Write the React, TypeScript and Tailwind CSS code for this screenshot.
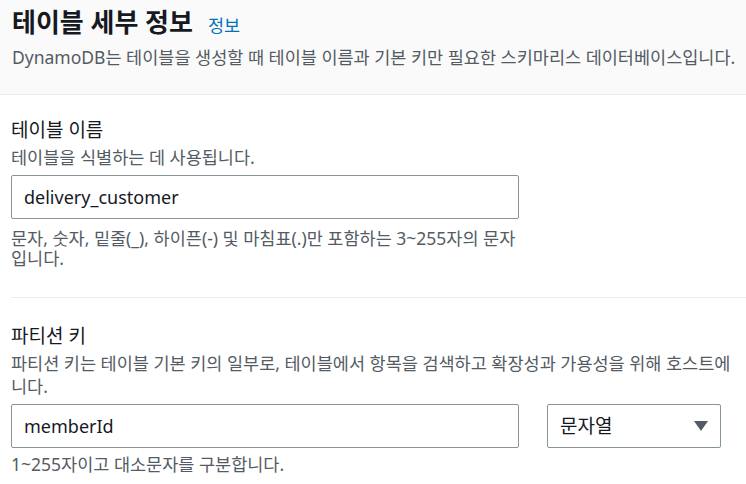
export default function App() {
  return (
    <div
      className="w-[746px] h-[484px] overflow-hidden bg-white text-[#16191f]"
      style={{ fontFamily: '"Noto Sans", "Noto Sans CJK KR", sans-serif' }}
    >
      {/* Header */}
      <div className="bg-[#fafafa] border-b border-[#eaeded] pl-[12px] pt-[6px] pb-[25px]">
        <div className="flex items-baseline gap-[15px]">
          <h2 className="text-[26px] leading-[32px] font-bold">테이블 세부 정보</h2>
          <a className="text-[17.5px] text-[#0073bb]">정보</a>
        </div>
        <p className="mt-[7px] text-[17.5px] leading-[24px] text-[#545b64] whitespace-nowrap">
          DynamoDB는 테이블을 생성할 때 테이블 이름과 기본 키만 필요한 스키마리스 데이터베이스입니다.
        </p>
      </div>

      {/* Body */}
      <div className="pl-[11px]">
        <div className="pt-[22px]">
          <label className="block text-[19px] leading-[26px]">테이블 이름</label>
          <p className="mt-[3px] text-[17.5px] leading-[22px] text-[#545b64]">테이블을 식별하는 데 사용됩니다.</p>
          <div className="mt-[7px] w-[508px] h-[44px] border border-[#879596] rounded-[2px] flex items-center px-[12px] text-[18px]">
            delivery_customer
          </div>
          <p className="mt-[9px] text-[17.5px] leading-[20px] text-[#545b64] whitespace-nowrap">
            문자, 숫자, 밑줄(_), 하이픈(-) 및 마침표(.)만 포함하는 3~255자의 문자
            <br />
            입니다.
          </p>
        </div>

        <div className="mt-[29px] border-t border-[#eaeded]" />

        <div className="pt-[25px]">
          <label className="block text-[19px] leading-[26px]">파티션 키</label>
          <p className="mt-[3px] text-[17.5px] leading-[23px] text-[#545b64] whitespace-nowrap">
            파티션 키는 테이블 기본 키의 일부로, 테이블에서 항목을 검색하고 확장성과 가용성을 위해 호스트에
            <br />
            니다.
          </p>
          <div className="mt-[6px] flex gap-[28px]">
            <div className="w-[508px] h-[44px] border border-[#879596] rounded-[2px] flex items-center px-[12px] text-[18px]">
              memberId
            </div>
            <div className="w-[174px] h-[44px] border border-[#879596] rounded-[2px] flex items-center justify-between pl-[12px] pr-[12px] text-[19px]">
              <span>문자열</span>
              <svg width="14" height="10" viewBox="0 0 14 10">
                <path d="M0 0 H14 L7 10 Z" fill="#545b64" />
              </svg>
            </div>
          </div>
          <p className="mt-[6px] text-[17.5px] leading-[20px] text-[#545b64]">1~255자이고 대소문자를 구분합니다.</p>
        </div>
      </div>
    </div>
  )
}
